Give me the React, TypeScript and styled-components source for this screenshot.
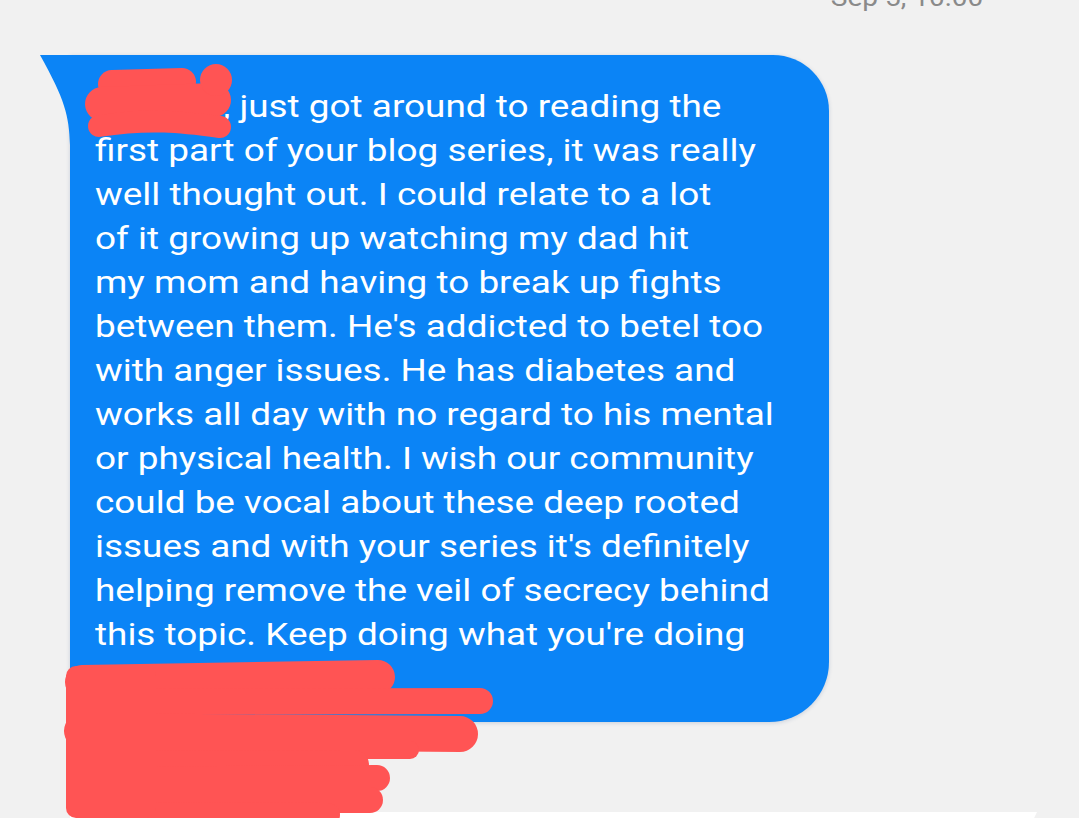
import React from "react";
import styled, { createGlobalStyle } from "styled-components";

const Global = createGlobalStyle`
  html, body {
    margin: 0;
    padding: 0;
    background: #f1f1f1;
    overflow: hidden;
  }
  #root {
    height: 818px;
    overflow: hidden;
  }
`;

const Page = styled.div`
  position: relative;
  width: 1079px;
  height: 818px;
  overflow: hidden;
  background: #f1f1f1;
  font-family: Roboto, "Noto Sans", "Liberation Sans", sans-serif;
`;

const TimeRow = styled.div`
  height: 55px;
  display: flex;
  justify-content: flex-end;
  padding-right: 96px;
`;

const Timestamp = styled.span`
  display: inline-block;
  margin-top: -16px;
  font-size: 26px;
  line-height: 26px;
  color: #8a8a8a;
  transform: scaleX(1.08);
  transform-origin: right center;
`;

const Thread = styled.div`
  display: flex;
  flex-direction: column;
  padding-left: 70px;
`;

const Bubble = styled.div`
  position: relative;
  width: 759px;
  height: 667px;
  box-sizing: border-box;
  padding: 29px 20px 0 25px;
  background: #0b84f6;
  border-radius: 0 56px 60px 24px;
  box-shadow: 0 1px 4px rgba(20, 60, 120, 0.18);
  color: #ffffff;
  font-size: 32px;
  line-height: 44px;
`;

const Tail = styled.svg`
  position: absolute;
  left: -31px;
  top: 0;
  width: 32px;
  height: 90px;
  overflow: visible;
`;

const Line = styled.div`
  white-space: nowrap;
  transform: scaleX(1.153);
  transform-origin: left center;
`;

const NameSpace = styled.span`
  display: inline-block;
  width: 111px;
`;

const NextCard = styled.div`
  margin-top: 90px;
  width: 967px;
  height: 12px;
  background: #ffffff;
  clip-path: polygon(0 0, 100% 0, 99.4% 100%, 0 100%);
`;

const Redaction = styled.svg`
  position: absolute;
  left: 0;
  top: 0;
  width: 1079px;
  height: 818px;
  pointer-events: none;
`;

const lines = [
  "first part of your blog series, it was really",
  "well thought out. I could relate to a lot",
  "of it growing up watching my dad hit",
  "my mom and having to break up fights",
  "between them. He's addicted to betel too",
  "with anger issues. He has diabetes and",
  "works all day with no regard to his mental",
  "or physical health. I wish our community",
  "could be vocal about these deep rooted",
  "issues and with your series it's definitely",
  "helping remove the veil of secrecy behind",
  "this topic. Keep doing what you're doing",
];

const RED = "#ff5454";

export default function App() {
  return (
    <Page>
      <Global />
      <TimeRow>
        <Timestamp>Sep 5, 10:00</Timestamp>
      </TimeRow>
      <Thread>
        <Bubble>
          <Tail viewBox="0 0 32 90">
            <path d="M1 0 L32 0 L32 90 L31 90 C30 60 26 45 1 0 Z" fill="#0b84f6" />
          </Tail>
          <Line>
            <NameSpace />, just got around to reading the
          </Line>
          {lines.map((l) => (
            <Line key={l}>{l}</Line>
          ))}
        </Bubble>
        <NextCard />
      </Thread>
      <Redaction viewBox="0 0 1079 818">
        <g stroke={RED} strokeLinecap="round" strokeLinejoin="round" fill="none">
          <path d="M112 84 L182 82" strokeWidth="28" />
          <path d="M102 104 L214 100" strokeWidth="34" />
          <path d="M99 126 C150 118 182 122 220 127" strokeWidth="22" />
          <path d="M82 682 L378 677" strokeWidth="34" />
          <path d="M82 702 L480 701" strokeWidth="26" />
          <path d="M82 731 L460 734" strokeWidth="36" />
          <path d="M82 750 L410 750" strokeWidth="18" />
          <path d="M82 766 L354 765" strokeWidth="30" />
          <path d="M82 780 L377 778" strokeWidth="26" />
          <path d="M90 800 L370 800" strokeWidth="26" />
          <path d="M95 814 L328 815" strokeWidth="24" />
        </g>
        <circle cx="216" cy="80" r="16" fill={RED} />
        <rect x="66" y="666" width="90" height="152" rx="10" fill={RED} />
      </Redaction>
    </Page>
  );
}
